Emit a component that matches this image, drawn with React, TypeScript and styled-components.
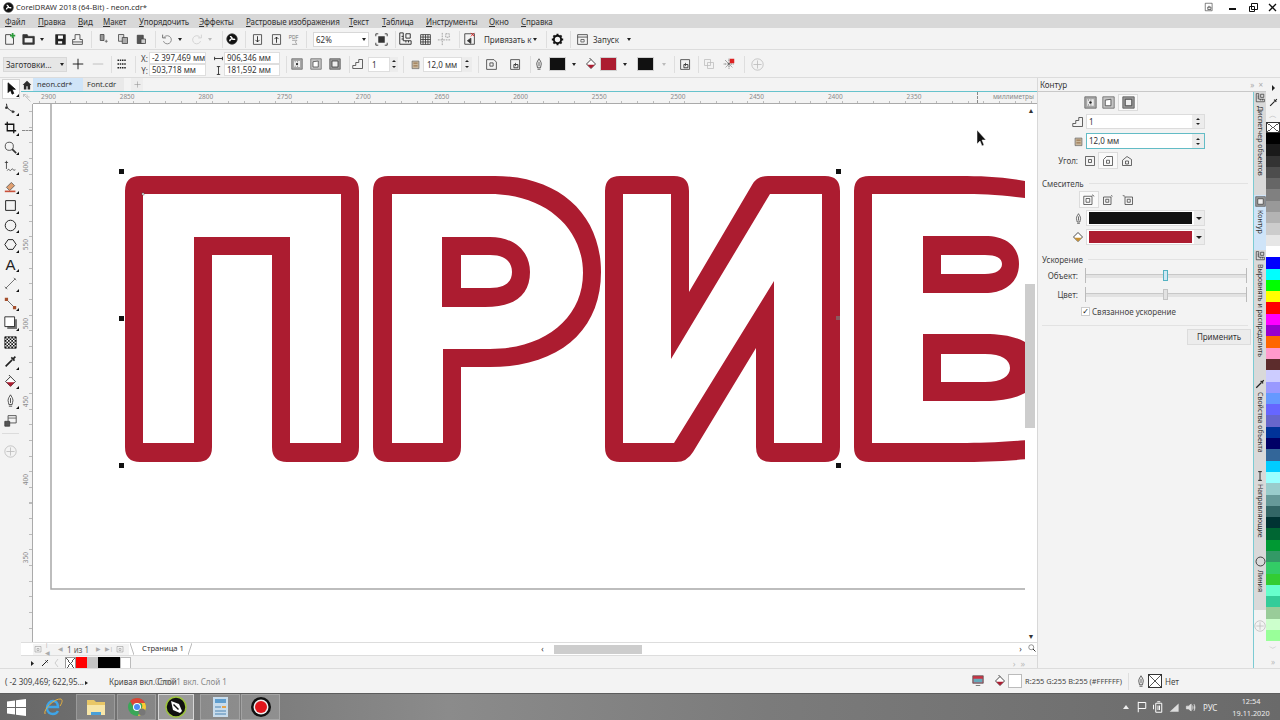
import React, { ReactNode } from 'react';
import styled, { createGlobalStyle } from 'styled-components';

const RED = '#ac1c30';
const FONT = '"Noto Sans", "Open Sans", "Liberation Sans", sans-serif';

const Global = createGlobalStyle`
  html, body { margin: 0; padding: 0; width: 1280px; height: 720px; overflow: hidden; background: #f3f3f3; }
  * { box-sizing: border-box; }
  u { text-underline-offset: 1px; text-decoration-thickness: 1px; }
`;

const G: Record<string, ReactNode> = {
  newdoc: <><path d="M3 3h6l3 3v8H3z" /><path stroke="#2c9c3c" strokeWidth="2" d="M11 1v6M8 4h6" /></>,
  open: <><path fill="#333" d="M1 3h5l1 2h7v9H1z" /><path fill="#f3f3f3" stroke="none" d="M3 7h9v5H3z" /></>,
  save: <><path fill="#222" d="M2 2h12v12H2z" /><path fill="#fff" stroke="none" d="M5 3h6v4H5zM5 10h5v3H5z" /></>,
  publish: <path d="M5 2h6v6h3v6H2V8h3zM2 11h12" />,
  cut: <><path fill="#999" d="M3 2h5v8H3z" /><path stroke="#555" d="M9 11h4M11 9v4" /></>,
  copy: <><path fill="#ddd" d="M2 2h7v9H2z" /><path fill="#aaa" d="M7 6h7v8H7z" /></>,
  paste: <><path fill="#555" d="M3 3h8v11H3z" /><path fill="#ccc" d="M8 8h6v6H8z" /></>,
  undo: <><path stroke="#777" d="M4 5a5 5 0 1 1-1 5" /><path stroke="#555" d="M2 2v4h4" /></>,
  redo: <><path stroke="#ccc" d="M12 5a5 5 0 1 0 1 5" /><path stroke="#ccc" d="M14 2v4h-4" /></>,
  corel: <><circle cx="8" cy="8" r="7" fill="#111" /><path stroke="#fff" strokeWidth="2" d="M5 11c0-4 3-2 3-4s-2-1-2-3M8 8c2 0 3 1 4 0" /></>,
  imp: <><path d="M3 2h10v12H3z" /><path stroke="#111" d="M8 4v7M5.5 8.5 8 11l2.5-2.5" /></>,
  exp: <><path d="M3 2h10v12H3z" /><path stroke="#111" d="M8 12V5M5.5 7.5 8 5l2.5 2.5" /></>,
  pdf: <><text x="1" y="7" fontSize="6" fill="#777" stroke="none" fontFamily="Liberation Sans">PDF</text><path stroke="#999" d="M5 9h6l-2 2 2 3H5" /></>,
  fit: <><path fill="#333" stroke="none" d="M4 4h8v8H4z" /><path stroke="#222" d="M1 4V1h3M12 1h3v3M15 12v3h-3M4 15H1v-3" /></>,
  rulers: <path stroke="#222" d="M2 1h4v9h9v4H2zM4 5h2M4 8h2M9 12v-2M12 12v-2M9 2h5v5H9z" />,
  grid: <path stroke="#333" d="M2 2h12v12H2zM2 5h12M2 8h12M2 11h12M5 2v12M8 2v12M11 2v12" />,
  guides: <path stroke="#999" strokeDasharray="2 1" d="M6 1v14M1 9h14M10 2h4v4h-4z" />,
  snap: <><path d="M2 2h11v12H2z" /><path stroke="#d22" d="m9 1 4 4m0-4-4 4" /><path fill="#333" d="M5 10l4-3v6z" /></>,
  gear: <><circle cx="8" cy="8" r="4.5" stroke="#111" strokeWidth="2.4" /><path stroke="#111" strokeWidth="2.4" d="M8 1v2M8 13v2M1 8h2M13 8h2M3 3l1.5 1.5M11.5 11.5 13 13M13 3l-1.5 1.5M4.500 11.500 3 13" /></>,
  launch: <><path d="M2 2h12v12H2zM2 5h12" /><path stroke="#555" d="M6 8h4v3H6z" /></>,
  plus: <path stroke="#111" strokeWidth="1.200" d="M8 1v14M1 8h14" />,
  minus: <path stroke="#bbb" strokeWidth="1.200" d="M1 8h14" />,
  dots: <path stroke="#222" strokeDasharray="2 1" strokeWidth="2" d="M2 3h12M2 8h12M2 13h12" />,
  hsize: <path stroke="#222" d="M1 8h14M1 5v6M15 5v6" strokeWidth="1.500" />,
  vsize: <path stroke="#222" d="M8 1v14M5 1h6M5 15h6" strokeWidth="1.500" />,
  wrapA: <><path fill="#a8a8a8" stroke="#666" d="M1 1h14v14H1z" /><path fill="#eee" d="M4 4h8v8H4z" stroke="none" /><circle cx="8" cy="8" r="1.500" fill="#222" stroke="none" /><path stroke="#333" strokeDasharray="1 2" d="M5 5h6M5 11h6" /></>,
  wrapB: <><path fill="#c4c4c4" stroke="#666" d="M1 1h14v14H1z" /><path fill="#fff" stroke="#444" d="M4 5l7-1v8H4z" /></>,
  wrapC: <><path fill="#999" stroke="#555" d="M1 1h14v14H1z" /><path fill="#eee" stroke="#333" d="M4 4h8v8H4z" /></>,
  steps: <path stroke="#333" d="M1 14h13V2H9v4H5v4H1z" />,
  width: <><path fill="#c9b79c" stroke="#666" d="M3 3h10v11H3z" /><path stroke="#7a4a20" d="M5 6h6M5 10h6" /></>,
  corner: <><path d="M2 2h9l3 3v9H2z" /><path d="M6 6h4v4H6z" /></>,
  cornerB: <><path d="M6 2h8v12H2V6z" /><path d="M6 7h4v4H6z" /></>,
  cornerC: <><path d="m8 2 6 4v8H2V7z" /><path d="M6 8h4v4H6z" /></>,
  square: <><path d="M2 2h12v12H2z" /><path d="M6 6h4v4H6z" /></>,
  boxA: <><path d="M1 3h11v11H1z" /><path d="M4 6h5v5H4z" /><path d="M12 1l3 2" /></>,
  boxB: <><path d="M2 4h10v10H2z" /><path d="M5 7h4v4H5z" /><path d="M12 2l2 1" /></>,
  boxC: <><path d="M4 4h10v10H4z" /><path d="M7 7h4v4H7z" /><path d="M1 2l3 1" /></>,
  pen: <path stroke="#333" d="M8 1c-1 2-3 4-3 7 0 2 1 3 1 5h4c0-2 1-3 1-5 0-3-2-5-3-7zM8 5v6M6 15h4" />,
  fill: <><path fill="#fff" stroke="#111" d="m2 8 6-6 6 6-6 6z" /><path fill={RED} stroke="none" d="m3 9 10 0-5 5z" /><path stroke="#111" d="M8 2 6 0" /></>,
  fillY: <><path fill="#fff" stroke="#111" d="m2 8 6-6 6 6-6 6z" /><path fill="#c89030" stroke="none" d="m3 9 10 0-5 5z" /></>,
  arrange: <><path d="M2 2h11v12H2z" /><path stroke="#222" d="M6 8h5v4H6z" /><path d="M8 10v-4" /></>,
  weld: <path stroke="#bbb" d="M2 2h8v8H2zM6 6h8v8H6z" />,
  spark: <><path stroke="#222" strokeDasharray="1 1" d="M8 1v14M1 8h14M3 3l10 10M13 3 3 13" /><path fill="#d22" stroke="none" d="M9 1h6v6H9z" /></>,
  addc: <><circle cx="8" cy="8" r="7" stroke="#bbb" /><path stroke="#bbb" d="M8 3v10M3 8h10" /></>,
  arrow: <path fill="#111" stroke="#111" d="M5 1v12l3-3 2 5 2-1-2-5h4z" />,
  shape: <><path stroke="#333" d="M3 2c0 5 4 9 10 10" strokeWidth="1.300" /><path fill="#222" d="M2 6h2v2H2zM10 11h2v2h-2z" /></>,
  crop: <path stroke="#111" strokeWidth="1.600" d="M4 1v11h11M1 4h11v11" />,
  zoom: <><circle cx="6.500" cy="6.500" r="5" stroke="#333" /><path stroke="#333" strokeWidth="2" d="m10 10 5 5" /></>,
  free: <path stroke="#333" d="M3 1v10M1 3h4M4 13c2-4 3 2 5-1s2 2 5 0" />,
  eraser: <><path fill="#e2a070" stroke="#555" d="M3 9 9 3l4 4-6 6z" /><path fill="#c9503a" stroke="none" d="M1 13h13v2H1z" /></>,
  rect: <path stroke="#222" d="M2 2h12v12H2z" strokeWidth="1.200" />,
  ell: <circle cx="8" cy="8" r="6.500" stroke="#222" strokeWidth="1.200" />,
  poly: <path stroke="#222" d="m5 2h6l4 6-4 6H5L1 8z" strokeWidth="1.200" />,
  line: <path stroke="#555" d="m2 14 12-12M1 12l3 3M12 1l3 3" />,
  conn: <><path stroke="#555" d="m3 3 10 10" /><path fill="#a5502e" stroke="none" d="M1 1h4v4H1zM11 11h4v4h-4z" /></>,
  shadow: <><path fill="#777" stroke="none" d="M4 4h12v12H4z" /><path fill="#fff" stroke="#111" d="M1 1h12v12H1z" /></>,
  checker: <><path fill="#fff" stroke="#222" d="M1 1h14v14H1z" /><path stroke="#111" strokeWidth="2" strokeDasharray="2 2" d="M1 2h14M3 4h12M1 6h14M3 8h12M1 10h14M3 12h12M1 14h14" /></>,
  drop: <path stroke="#222" strokeWidth="2" d="m2 14 8-8M9 3l4 4M11 5l3-3" />,
  interact: <><path d="M5 2h10v9H5z" /><path fill="#555" d="M1 9h6v6H1z" /><path stroke="#555" d="M5 5h10" /></>,
  home: <path fill="#2d2d2d" stroke="none" d="M8 1 1 8h2v7h4v-5h2v5h4V8h2z" />,
  rulerCorner: <path stroke="#999" d="M1 1l14 14M1 1v5M1 1h5M8 1v5h5" />,
  lock: <><path stroke="#888" d="M2 3h12v11H2zM6 7h4v4H6z" /></>,
  monitor: <><path fill="#c34" stroke="#555" d="M1 1h14v10H1z" /><path fill="#6ab" stroke="none" d="M2 5h12v5H2z" /><path stroke="#555" d="M5 14h6" /></>,
  flag: <path stroke="#fff" strokeWidth="1.300" d="M3 1v14M3 2h10v8H3" />,
  batt: <path stroke="#fff" strokeWidth="1.300" d="M5 3h8v12H5zM7 1h4M2 5v6M8 6v6M10 6v6" />,
  signal: <path fill="#ddd" stroke="none" d="M1 14 14 2v12z" />,
  sound: <path fill="#ddd" stroke="#ddd" d="M2 6h3l4-3v10L5 10H2zM11 5c1 2 1 4 0 6M13 3c2 3 2 7 0 10" />,
};

const Ico = ({ n, s = 14 }: { n: string; s?: number }) => (
  <svg width={s} height={s} viewBox="0 0 16 16" fill="none" stroke="#3c3c3c" strokeWidth="1">{G[n]}</svg>
);

const Page = styled.div`
  width: 1280px;
  height: 720px;
  display: flex;
  flex-direction: column;
  font-family: ${FONT};
  font-size: 8px;
  color: #333;
  background: #f3f3f3;
  overflow: hidden;
`;

const TitleBar = styled.div`
  height: 14px;
  background: #fff;
  display: flex;
  align-items: center;
  padding-left: 3px;
  gap: 2px;
  font-size: 7.700px;
`;

const TitleLogo = styled.span`
  width: 11px;
  height: 11px;
  display: flex;
`;

const WinControls = styled.div`
  margin-left: auto;
  display: flex;
  align-items: center;
  height: 14px;
`;

const WinBtn = styled.span<{ $w: number; $ml?: number }>`
  width: ${p => p.$w}px;
  margin-left: ${p => p.$ml ?? 0}px;
  display: flex;
  justify-content: center;
`;

const MenuBar = styled.div`
  height: 14px;
  background: #d8d8d8;
  display: flex;
  align-items: center;
  padding-left: 5px;
  font-size: 8px;
  letter-spacing: -0.1px;
`;

const MenuItem = styled.span<{ $w: number }>`
  width: ${p => p.$w}px;
  flex: none;
  white-space: nowrap;
`;

const Bar = styled.div<{ $h: number; $pl: number }>`
  height: ${p => p.$h}px;
  padding-left: ${p => p.$pl}px;
  padding-top: 1px;
  display: flex;
  align-items: center;
  background: #f3f3f3;
  border-bottom: 1px solid #dcdcdc;
  flex: none;
`;

const Tool = styled.span<{ $w: number; $ml?: number }>`
  width: ${p => p.$w}px;
  margin-left: ${p => p.$ml ?? 0}px;
  flex: none;
  display: flex;
  align-items: center;
  justify-content: center;
  position: relative;
`;

const Caret = styled.span<{ $ml?: number; $off?: boolean }>`
  width: 8px;
  margin-left: ${p => p.$ml ?? 0}px;
  flex: none;
  display: flex;
  justify-content: center;
  &::before {
    content: '';
    border-left: 2.5px solid transparent;
    border-right: 2.5px solid transparent;
    border-top: 3px solid ${p => (p.$off ? '#bbb' : '#222')};
  }
`;

const Sep = styled.span<{ $ml: number }>`
  width: 1px;
  height: 17px;
  margin-left: ${p => p.$ml}px;
  background: #dedede;
  flex: none;
`;

const Label = styled.span<{ $ml?: number; $w?: number }>`
  margin-left: ${p => p.$ml ?? 0}px;
  width: ${p => (p.$w ? `${p.$w}px` : 'auto')};
  flex: none;
  white-space: nowrap;
`;

const ColorCode = styled(Label)`
  font-size: 7.400px;
`;

const Combo = styled.span<{ $w: number; $ml?: number; $grey?: boolean }>`
  width: ${p => p.$w}px;
  height: 15px;
  margin-left: ${p => p.$ml ?? 0}px;
  flex: none;
  display: flex;
  align-items: center;
  justify-content: space-between;
  padding-left: 2px;
  border: 1px solid #d8d8d8;
  background: ${p => (p.$grey ? '#e6e6e6' : '#fff')};
`;

const Coords = styled.div<{ $w: number; $ml: number; $box: number }>`
  width: ${p => p.$w}px;
  margin-left: ${p => p.$ml}px;
  display: grid;
  grid-template-columns: 1fr ${p => p.$box}px;
  grid-auto-rows: 12px;
  align-items: center;
  flex: none;
`;

const CoordLabel = styled.span`
  display: flex;
  justify-content: center;
  color: #444;
`;

const CoordValue = styled.span`
  height: 12px;
  background: #fff;
  border: 1px solid #dedede;
  padding-left: 2px;
  line-height: 10px;
  white-space: nowrap;
  overflow: hidden;
`;

const Input = styled.span<{ $w: number; $ml?: number }>`
  width: ${p => p.$w}px;
  height: 15px;
  margin-left: ${p => p.$ml ?? 0}px;
  flex: none;
  background: #fff;
  border: 1px solid #dedede;
  padding-left: 3px;
  line-height: 13px;
`;

const Spin = styled.span<{ $w: number }>`
  width: ${p => p.$w}px;
  height: 15px;
  flex: none;
  display: flex;
  flex-direction: column;
  align-items: center;
  justify-content: space-around;
  padding: 2px 0;
  background: #ececec;
  &::before, &::after {
    content: '';
    border-left: 2px solid transparent;
    border-right: 2px solid transparent;
  }
  &::before { border-bottom: 2.5px solid #222; }
  &::after { border-top: 2.5px solid #222; }
`;

const Swatch = styled.span<{ $c: string; $ml?: number }>`
  width: 17px;
  height: 14px;
  margin-left: ${p => p.$ml ?? 0}px;
  flex: none;
  background: ${p => p.$c};
  border: 1px solid #d0d0d0;
`;

const Workspace = styled.div`
  height: 590px;
  display: flex;
  flex: none;
`;

const Toolbox = styled.div`
  width: 21px;
  flex: none;
  display: flex;
  flex-direction: column;
  align-items: center;
  padding-top: 1px;
  background: #f3f3f3;
`;

const ToolBtn = styled.span<{ $on?: boolean; $fly?: boolean }>`
  width: 18px;
  height: 19.500px;
  flex: none;
  display: flex;
  align-items: center;
  justify-content: center;
  position: relative;
  background: ${p => (p.$on ? '#fff' : 'transparent')};
  outline: ${p => (p.$on ? '1px solid #d4d4d4' : 'none')};
  outline-offset: -1px;
  &::after {
    content: '';
    display: ${p => (p.$fly ? 'block' : 'none')};
    position: absolute;
    right: 1px;
    bottom: 2px;
    border-left: 3px solid transparent;
    border-bottom: 3px solid #111;
  }
`;

const BigA = styled.span`
  font-size: 15px;
  line-height: 15px;
  color: #222;
  font-family: "Liberation Sans", sans-serif;
`;

const ToolRule = styled.span`
  width: 17px;
  height: 1px;
  margin: 3px 0 8px;
  background: #dcdcdc;
`;

const Center = styled.div`
  width: 1016px;
  flex: none;
  display: flex;
  flex-direction: column;
`;

const TabStrip = styled.div`
  height: 14px;
  flex: none;
  display: flex;
  align-items: center;
  background: #f3f3f3;
  border-bottom: 1px solid #66c2cc;
  font-size: 7.500px;
`;

const HomeTab = styled.span`
  width: 12px;
  display: flex;
  justify-content: center;
`;

const DocTab = styled.span<{ $on?: boolean; $w: number }>`
  width: ${p => p.$w}px;
  height: 13px;
  padding-left: 4px;
  line-height: 13px;
  background: ${p => (p.$on ? '#cfe4f8' : '#e9e9e9')};
`;

const AddTab = styled.span`
  width: 12px;
  height: 13px;
  margin-left: 7px;
  background: #e6e6e6;
  display: flex;
  align-items: center;
  justify-content: center;
  opacity: .45;
`;

const RulerRow = styled.div`
  height: 12px;
  flex: none;
  display: flex;
  background: #f3f3f3;
  position: relative;
`;

const RulerCorner = styled.span`
  width: 12px;
  flex: none;
  display: flex;
  align-items: center;
  justify-content: center;
`;

const HScale = styled.div`
  flex: 1;
  display: flex;
  padding-left: 8px;
  font-size: 6.500px;
  line-height: 9px;
  color: #8a8a8a;
  border-bottom: 1px solid #aaa;
  background:
    repeating-linear-gradient(90deg, #bbb 0 1px, transparent 1px 15.740px) 6px 100% / 100% 2px no-repeat;
`;

const HCell = styled.span`
  width: 78.700px;
  flex: none;
`;

const RulerUnit = styled.span`
  margin-left: auto;
  padding-right: 3px;
  white-space: nowrap;
`;

const GuideMark = styled.span`
  position: absolute;
  left: 956px;
  top: 0;
  height: 11px;
  border-left: 1px dashed #888;
`;

const CanvasRow = styled.div`
  height: 538px;
  flex: none;
  display: flex;
`;

const VScale = styled.div`
  width: 12px;
  flex: none;
  padding-top: 24px;
  display: flex;
  flex-direction: column;
  align-items: flex-start;
  position: relative;
  font-size: 6.500px;
  color: #8a8a8a;
  border-right: 1px solid #aaa;
  background:
    repeating-linear-gradient(180deg, #bbb 0 1px, transparent 1px 15.660px) 100% 7px / 3px 100% no-repeat;
`;

const VCell = styled.span`
  height: 78.300px;
  flex: none;
  display: flex;
  align-items: center;
  justify-content: center;
  writing-mode: vertical-rl;
  transform: rotate(180deg);
  line-height: 10px;
`;

const VGuide = styled.span`
  position: absolute;
  left: 1px;
  top: 26px;
  width: 10px;
  border-top: 1px dashed #888;
`;

const Drawing = styled.div`
  width: 992px;
  height: 538px;
  flex: none;
  background: #fff;
  overflow: hidden;
  svg { display: block; }
`;

const VScroll = styled.div`
  width: 12px;
  flex: none;
  background: #fff;
  display: flex;
  flex-direction: column;
  align-items: flex-start;
`;

const ScrollBtn = styled.span<{ $c: string; $mt?: number }>`
  width: 12px;
  height: 12px;
  margin-top: ${p => p.$mt ?? 0}px;
  flex: none;
  display: flex;
  align-items: center;
  justify-content: center;
  font-size: 7px;
  color: #333;
  &::before { content: '${p => p.$c}'; }
`;

const VThumb = styled.span`
  width: 10px;
  height: 144px;
  margin-top: 168px;
  background: #cdcdcd;
  flex: none;
`;

const NavRow = styled.div`
  height: 12px;
  flex: none;
  display: flex;
  align-items: center;
  padding-left: 12px;
  background: #fff;
  border-top: 1px solid #ddd;
  border-bottom: 1px solid #ddd;
  box-sizing: content-box;
  margin-bottom: -2px;
`;

const Pager = styled.div`
  width: 96px;
  height: 11px;
  flex: none;
  display: flex;
  align-items: center;
  gap: 3px;
  padding-left: 1px;
  background: #f3f3f3;
  color: #666;
  font-size: 8px;
`;

const PagerBtn = styled.span`
  width: 8px;
  flex: none;
  display: flex;
  justify-content: center;
  color: #aaa;
  font-size: 6px;
`;

const PageTab = styled.span`
  width: 48px;
  height: 12px;
  margin-left: 5px;
  line-height: 11px;
  text-align: center;
  background: #fff;
  flex: none;
  font-size: 7.600px;
`;

const TabSlash = styled.svg`
  width: 4px;
  height: 12px;
  flex: none;
  margin-left: 1px;
`;

const HTrack = styled.div`
  margin-left: auto;
  width: 500px;
  height: 11px;
  flex: none;
  display: flex;
  align-items: center;
`;

const HThumb = styled.span`
  width: 88px;
  height: 9px;
  margin-left: 6px;
  background: #cdcdcd;
`;

const HArrow = styled.span<{ $auto?: boolean }>`
  width: 11px;
  margin-left: ${p => (p.$auto ? 'auto' : '0')};
  text-align: center;
  font-size: 8px;
  line-height: 10px;
  flex: none;
`;

const DocPalette = styled.div`
  height: 14px;
  flex: none;
  margin-top: 2px;
  display: flex;
  align-items: center;
  padding-left: 7px;
  background: #f3f3f3;
`;

const PalChip = styled.span<{ $c: string }>`
  width: 11px;
  height: 13px;
  flex: none;
  background: ${p => p.$c};
  border: ${p => (p.$c === '#fff' ? '1px solid #bbb' : 'none')};
`;

const PalNone = styled.span`
  width: 11px;
  height: 13px;
  flex: none;
  background:
    linear-gradient(to top right, transparent 47%, #555 47% 53%, transparent 53%),
    linear-gradient(to top left, #fff 47%, #555 47% 53%, #fff 53%);
  border: 1px solid #999;
`;

const FirstChip = styled(PalNone)`
  margin-left: 5px;
`;

const PalEnd = styled.span`
  margin-left: auto;
  padding-right: 7px;
  color: #bbb;
  letter-spacing: 5px;
  font-size: 9px;
`;

const RightGroup = styled.div`
  width: 229px;
  flex: none;
  display: flex;
  flex-direction: column;
  box-shadow: inset 1px 0 #d8d8d8;
`;

const DockTitle = styled.div`
  height: 14px;
  flex: none;
  display: flex;
  align-items: center;
  padding-left: 3px;
  border-bottom: 1px solid #c8c8c8;
`;

const DockTitleBtns = styled.span`
  margin-left: auto;
  color: #aaa;
  font-size: 8px;
  display: flex;
  gap: 4px;
  padding-right: 3px;
`;

const DockBody = styled.div`
  flex: 1;
  display: flex;
  min-height: 0;
`;

const Docker = styled.div`
  width: 216px;
  flex: none;
  display: flex;
  flex-direction: column;
`;

const DockRow = styled.div<{ $h: number; $mt: number; $pl?: number }>`
  height: ${p => p.$h}px;
  margin-top: ${p => p.$mt}px;
  padding-left: ${p => p.$pl ?? 0}px;
  flex: none;
  display: flex;
  align-items: center;
`;

const RowIcon = styled.span<{ $on?: boolean; $ml?: number }>`
  width: 18px;
  height: 15px;
  margin-left: ${p => p.$ml ?? 0}px;
  flex: none;
  display: flex;
  align-items: center;
  justify-content: center;
  background: ${p => (p.$on ? '#fafafa' : 'transparent')};
  outline: ${p => (p.$on ? '1px solid #dcdcdc' : 'none')};
`;

const FieldIcon = styled.span`
  width: 14px;
  flex: none;
  display: flex;
  justify-content: center;
`;

const Field = styled.div<{ $focus?: boolean }>`
  width: 119px;
  height: 100%;
  margin-left: 1px;
  flex: none;
  display: flex;
  background: #fff;
  border: 1px solid ${p => (p.$focus ? '#63bcc6' : '#dcdcdc')};
`;

const FieldText = styled.span`
  flex: 1;
  padding-left: 2px;
  line-height: 13px;
`;

const FieldSpin = styled(Spin)`
  width: 12px;
  height: 100%;
`;

const RowLabel = styled.span`
  width: 41px;
  flex: none;
  text-align: right;
  color: #444;
`;

const Section = styled.div<{ $mt: number }>`
  height: 11px;
  margin-top: ${p => p.$mt}px;
  padding: 0 5px;
  flex: none;
  display: flex;
  align-items: center;
  gap: 5px;
  color: #444;
  &::after { content: ''; flex: 1; height: 1px; background: #e2e2e2; }
`;

const ColorSelect = styled.div`
  width: 119px;
  height: 100%;
  margin-left: 1px;
  flex: none;
  display: flex;
  align-items: center;
  padding-left: 2px;
  background: #fff;
  border: 1px solid #dcdcdc;
`;

const ColorBar = styled.span<{ $c: string }>`
  width: 103px;
  height: 12px;
  flex: none;
  background: ${p => p.$c};
`;

const ColorCaret = styled.span`
  flex: 1;
  height: 100%;
  margin-left: 2px;
  background: #ececec;
  display: flex;
  align-items: center;
  justify-content: center;
  &::before {
    content: '';
    border-left: 3px solid transparent;
    border-right: 3px solid transparent;
    border-top: 3px solid #222;
  }
`;

const Slider = styled.div`
  width: 162px;
  height: 100%;
  margin-left: 7px;
  flex: none;
  position: relative;
  display: flex;
  align-items: center;
  border-left: 1px solid #bbb;
  border-right: 1px solid #bbb;
  &::before { content: ''; flex: 1; height: 3px; background: #e2e2e2; border-top: 1px solid #c8c8c8; }
`;

const Thumb = styled.span<{ $active?: boolean }>`
  position: absolute;
  left: 77px;
  top: 2px;
  width: 5px;
  height: 11px;
  background: ${p => (p.$active ? '#cfe8f4' : '#e2e2e2')};
  border: 1px solid ${p => (p.$active ? '#53b2c2' : '#c4c4c4')};
`;

const Check = styled.span`
  width: 9px;
  height: 9px;
  flex: none;
  background: #fff;
  border: 1px solid #ccc;
  color: #111;
  font-size: 8px;
  line-height: 7px;
  text-align: center;
  font-family: "DejaVu Sans", sans-serif;
`;

const CheckText = styled.span`
  margin-left: 2px;
  color: #444;
`;

const DockLine = styled.div`
  height: 1px;
  margin: 8px 5px 0;
  flex: none;
  background: #e2e2e2;
`;

const ButtonRow = styled.div`
  margin-top: 3px;
  padding-right: 2px;
  flex: none;
  display: flex;
  justify-content: flex-end;
`;

const Apply = styled.span`
  width: 64px;
  height: 16px;
  line-height: 14px;
  text-align: center;
  background: #ececec;
  border: 1px solid #dcdcdc;
`;

const VTabs = styled.div`
  width: 13px;
  flex: none;
  display: flex;
  flex-direction: column;
  align-items: center;
  background: #f3f3f3;
  border-left: 1px solid #7ccbd3;
`;

const VTab = styled.div<{ $h: number; $on?: boolean }>`
  width: 100%;
  height: ${p => p.$h}px;
  flex: none;
  display: flex;
  flex-direction: column;
  align-items: center;
  padding-top: 1px;
  background: ${p => (p.$on ? '#cfe4f8' : '#d9d9d9')};
  font-size: 7px;
  color: #333;
  overflow: hidden;
  svg { flex: none; }
`;

const VTabText = styled.span`
  writing-mode: vertical-rl;
  white-space: nowrap;
  line-height: 12px;
  margin-top: 3px;
  flex: none;
`;

const VTabAdd = styled.span`
  margin-top: 10px;
  display: flex;
`;

const Palette = styled.div`
  width: 14px;
  flex: none;
  display: flex;
  flex-direction: column;
  align-items: center;
`;

const PalTool = styled.span<{ $h: number }>`
  height: ${p => p.$h}px;
  flex: none;
  display: flex;
  align-items: center;
  justify-content: center;
  font-size: 8px;
  color: #bbb;
`;

const ColorCell = styled.span<{ $c: string }>`
  width: 14px;
  height: 11.300px;
  flex: none;
  background: ${p => p.$c};
`;

const NoColor = styled(PalNone)`
  width: 14px;
  height: 11px;
  border-color: #333;
`;

const StatusBar = styled.div`
  height: 25px;
  flex: none;
  display: flex;
  align-items: center;
  padding-left: 5px;
  background: #f3f3f3;
  border-top: 1px solid #dcdcdc;
  color: #444;
`;

const StatusCoord = styled.span`
  width: 80px;
  flex: none;
  white-space: nowrap;
`;

const StatusTri = styled.span`
  width: 24px;
  flex: none;
  &::before {
    content: '';
    display: inline-block;
    border-top: 2.500px solid transparent;
    border-bottom: 2.500px solid transparent;
    border-left: 3px solid #222;
  }
`;

const StatusDark = styled.span`
  white-space: nowrap;
`;

const StatusFaint = styled.span`
  margin-left: -22px;
  white-space: nowrap;
  color: #888;
`;

const StatusRight = styled.div`
  margin-left: auto;
  margin-right: 101px;
  display: flex;
  align-items: center;
`;

const StatusSwatch = styled.span<{ $ml: number }>`
  width: 14px;
  height: 14px;
  margin-left: ${p => p.$ml}px;
  flex: none;
  background: #fff;
  border: 1px solid #bbb;
`;

const StatusCross = styled(PalNone)`
  width: 14px;
  height: 14px;
  margin-left: 1px;
  border-color: #333;
`;

const TaskBar = styled.div`
  height: 27px;
  flex: none;
  display: flex;
  align-items: stretch;
  background: linear-gradient(90deg, #676767 0, #8b8b8b 35%, #7b7b7b 60%, #6a6a6a 100%);
  border-top: 1px solid #5d5d5d;
`;

const TaskBtn = styled.span<{ $w: number; $ml: number; $on?: boolean; $flat?: boolean }>`
  width: ${p => p.$w}px;
  margin-left: ${p => p.$ml}px;
  flex: none;
  display: flex;
  align-items: center;
  justify-content: center;
  background: ${p => (p.$flat ? 'transparent' : p.$on ? 'rgba(255,255,255,.28)' : 'rgba(255,255,255,.14)')};
  border: 1px solid ${p => (p.$flat ? 'transparent' : p.$on ? 'rgba(255,255,255,.6)' : 'rgba(255,255,255,.2)')};
`;

const Tray = styled.div`
  margin-left: auto;
  display: flex;
  align-items: center;
  color: #eee;
`;

const TrayIcon = styled.span`
  width: 16px;
  flex: none;
  display: flex;
  justify-content: center;
`;

const TrayLang = styled.span`
  width: 34px;
  flex: none;
  padding-left: 5px;
`;

const Clock = styled.span`
  width: 38px;
  margin-right: 10px;
  flex: none;
  font-size: 7.300px;
  text-align: center;
  line-height: 12px;
  white-space: nowrap;
`;

const Artwork = () => (
  <svg width="992" height="538" viewBox="33 104 992 538">
    <path d="M51 104V589H1025" fill="none" stroke="#a8a8a8" strokeWidth="1.500" />
    <path
      fill={RED}
      fillRule="evenodd"
      d="M140 176H344Q359 176 359 191V447Q359 462 344 462H287Q272 462 272 447V255H212V447Q212 462 197 462H140Q125 462 125 447V191Q125 176 140 176Z
         M143 194H341V443H290V237H194V443H143Z"
    />
    <path
      fill={RED}
      fillRule="evenodd"
      d="M388 176H495C560 176 601 215 601 272C601 330 560 367 490 367H461V447Q461 462 446 462H388Q373 462 373 447V191Q373 176 388 176Z
         M392 194H490C545 194 583 228 583 273C583 318 545 349 490 349H443V443H392Z
         M442 237H490C515 237 530 252 530 272C530 295 515 307 485 307H442Z
         M461 255H490C505 255 512 262 512 272C512 282 505 288 490 288H461Z"
    />
    <path
      fill={RED}
      fillRule="evenodd"
      d="M620 176H674Q689 176 689 191V292L752 185Q757 176 768 176H825Q840 176 840 191V447Q840 462 825 462H771Q756 462 756 447V348L693 452Q687 462 676 462H620Q605 462 605 447V191Q605 176 620 176Z
         M623 194H671V359L770 194H822V443H774V281L674 443H623Z"
    />
    <path
      fill={RED}
      fillRule="evenodd"
      d="M869 176H960C985 176 1010 177 1040 184V458C1010 461 985 462 960 462H869Q854 462 854 447V191Q854 176 869 176Z
         M872 194H960C985 194 1005 195 1040 200V439C1005 442 985 443 960 443H872Z
         M923 236H985C1008 236 1019 248 1019 264C1019 282 1005 293 985 293H923Z
         M941 255H985C996 255 1002 258 1002 264C1002 270 996 274 985 274H941Z
         M923 334H985C1020 334 1040 345 1040 368C1040 390 1020 401 985 401H923Z
         M941 354H985C1002 354 1010 360 1010 368C1010 376 1002 382 985 382H941Z"
    />
    <g fill="#111">
      <rect x="119" y="169" width="5" height="5" />
      <rect x="119" y="316" width="5" height="5" />
      <rect x="119" y="463" width="5" height="5" />
      <rect x="836" y="169" width="5" height="5" />
      <rect x="836" y="463" width="5" height="5" />
    </g>
    <rect x="836" y="316" width="4" height="4" fill="#8a5a60" />
    <rect x="142" y="193" width="2" height="2" fill="#fff" stroke="#555" strokeWidth=".5" />
    <path d="M977 130V144L980 141L982 146L984 145L982 140H986Z" fill="#111" stroke="#fff" strokeWidth=".5" />
  </svg>
);

const menu: [string, string, number][] = [
  ['Ф', 'айл', 33], ['П', 'равка', 40], ['В', 'ид', 25], ['М', 'акет', 36],
  ['У', 'порядочить', 60], ['Э', 'ффекты', 47], ['Р', 'астровые изображения', 103],
  ['Т', 'екст', 33], ['Т', 'аблица', 44], ['И', 'нструменты', 63], ['О', 'кно', 32], ['С', 'правка', 40],
];

const toolboxIcons: [string, boolean][] = [
  ['shape', true], ['crop', true], ['zoom', true], ['free', true], ['eraser', true], ['rect', true],
  ['ell', true], ['poly', true], ['A', true], ['line', true], ['conn', true], ['shadow', true],
  ['checker', false], ['drop', true], ['fill', true], ['pen', true], ['interact', false],
];

const hLabels = ['2900', '2850', '2800', '2750', '2700', '2650', '2600', '2550', '2500', '2450', '2400', '2350'];
const vLabels = ['600', '550', '500', '450', '400', '350'];

const swatches = [
  '#000', '#1a1a1a', '#333', '#4d4d4d', '#666', '#808080', '#999', '#b3b3b3', '#ccc', '#e6e6e6', '#fff',
  '#0000ff', '#00ffff', '#00ff00', '#ffff00', '#ff0000', '#ff00ff', '#9900cc', '#ff6600', '#ff99cc', '#5c2c2c', '#ccccff',
  '#9999ff', '#6699ff', '#6666ff', '#6666cc', '#003399', '#000066', '#336699', '#00ccff', '#99ffff', '#99cccc',
  '#669999', '#336666', '#003333', '#006633', '#009933', '#339966', '#33cc66', '#33cc33', '#66ffcc', '#33cc99',
  '#99cc99', '#ccffcc', '#99ff99',
];

const App = () => (
  <Page>
    <Global />
    <TitleBar>
      <TitleLogo><Ico n="corel" s={11} /></TitleLogo>
      <span>CorelDRAW 2018 (64-Bit) - neon.cdr*</span>
      <WinControls>
        <WinBtn $w={14}><Ico n="arrange" s={10} /></WinBtn>
        <WinBtn $w={32}><svg width="7" height="8"><path d="M0 6h7" stroke="#111" strokeWidth="2" /></svg></WinBtn>
        <WinBtn $w={10}><svg width="9" height="9" fill="none" stroke="#111"><path d="M2.500.5h6v6h-6zM.5 3.500h5v5h-5z" /></svg></WinBtn>
        <WinBtn $w={16} $ml={6}><svg width="9" height="9" stroke="#111" strokeWidth="1.300"><path d="M1 1l7 7M8 1 1 8" /></svg></WinBtn>
      </WinControls>
    </TitleBar>

    <MenuBar>
      {menu.map(([a, b, w]) => <MenuItem key={a + b} $w={w}><u>{a}</u>{b}</MenuItem>)}
    </MenuBar>

    <Bar $h={22} $pl={1}>
      <Tool $w={18}><Ico n="newdoc" /></Tool>
      <Tool $w={18} $ml={1}><Ico n="open" /></Tool>
      <Caret />
      <Tool $w={16} $ml={6}><Ico n="save" s={13} /></Tool>
      <Tool $w={16} $ml={1}><Ico n="publish" s={13} /></Tool>
      <Sep $ml={6} />
      <Tool $w={16} $ml={4}><Ico n="cut" s={12} /></Tool>
      <Tool $w={16} $ml={3}><Ico n="copy" s={12} /></Tool>
      <Tool $w={16} $ml={2}><Ico n="paste" s={12} /></Tool>
      <Sep $ml={6} />
      <Tool $w={16} $ml={3}><Ico n="undo" s={13} /></Tool>
      <Caret $ml={1} />
      <Tool $w={16} $ml={4}><Ico n="redo" s={13} /></Tool>
      <Caret $ml={2} $off />
      <Sep $ml={8} />
      <Tool $w={16} $ml={1}><Ico n="corel" s={12} /></Tool>
      <Sep $ml={5} />
      <Tool $w={16} $ml={3}><Ico n="imp" s={13} /></Tool>
      <Tool $w={16} $ml={3}><Ico n="exp" s={13} /></Tool>
      <Tool $w={16} $ml={2}><Ico n="pdf" s={13} /></Tool>
      <Sep $ml={4} />
      <Combo $w={56} $ml={6}>62%<Caret /></Combo>
      <Tool $w={18} $ml={3}><Ico n="fit" s={13} /></Tool>
      <Sep $ml={5} />
      <Tool $w={16} $ml={1}><Ico n="rulers" /></Tool>
      <Tool $w={16} $ml={4}><Ico n="grid" s={13} /></Tool>
      <Tool $w={16} $ml={3}><Ico n="guides" /></Tool>
      <Sep $ml={7} />
      <Tool $w={16} $ml={2}><Ico n="snap" /></Tool>
      <Label $ml={6} $w={44}>Привязать к</Label>
      <Caret $ml={3} />
      <Sep $ml={7} />
      <Tool $w={16} $ml={2}><Ico n="gear" s={13} /></Tool>
      <Sep $ml={5} />
      <Tool $w={16} $ml={3}><Ico n="launch" s={13} /></Tool>
      <Label $ml={3} $w={26}>Запуск</Label>
      <Caret $ml={6} />
    </Bar>

    <Bar $h={28} $pl={3}>
      <Combo $w={64} $grey>Заготовки...<Caret /></Combo>
      <Tool $w={18} $ml={2}><Ico n="plus" s={12} /></Tool>
      <Tool $w={18} $ml={2}><Ico n="minus" s={12} /></Tool>
      <Sep $ml={4} />
      <Tool $w={16} $ml={2}><Ico n="dots" s={12} /></Tool>
      <Sep $ml={5} />
      <Coords $w={66} $ml={4} $box={57}>
        <CoordLabel>X:</CoordLabel><CoordValue>-2 397,469 мм</CoordValue>
        <CoordLabel>Y:</CoordLabel><CoordValue>503,718 мм</CoordValue>
      </Coords>
      <Coords $w={68} $ml={6} $box={56}>
        <CoordLabel><Ico n="hsize" s={9} /></CoordLabel><CoordValue>906,346 мм</CoordValue>
        <CoordLabel><Ico n="vsize" s={9} /></CoordLabel><CoordValue>181,592 мм</CoordValue>
      </Coords>
      <Sep $ml={6} />
      <Tool $w={18} $ml={1}><Ico n="wrapA" s={12} /></Tool>
      <Tool $w={18} $ml={1}><Ico n="wrapB" s={12} /></Tool>
      <Tool $w={18} $ml={1}><Ico n="wrapC" s={12} /></Tool>
      <Sep $ml={5} />
      <Tool $w={14} $ml={1}><Ico n="steps" s={12} /></Tool>
      <Input $w={22} $ml={3}>1</Input>
      <Spin $w={8} />
      <Sep $ml={5} />
      <Tool $w={16} $ml={3}><Ico n="width" s={11} /></Tool>
      <Input $w={39}>12,0 мм</Input>
      <Spin $w={10} />
      <Sep $ml={6} />
      <Tool $w={18} $ml={3}><Ico n="corner" s={13} /></Tool>
      <Tool $w={18} $ml={6}><Ico n="arrange" s={13} /></Tool>
      <Sep $ml={6} />
      <Tool $w={12} $ml={2}><Ico n="pen" s={12} /></Tool>
      <Swatch $c="#111" $ml={4} />
      <Caret $ml={4} />
      <Tool $w={14} $ml={6}><Ico n="fill" s={12} /></Tool>
      <Swatch $c={RED} $ml={2} />
      <Caret $ml={4} />
      <Swatch $c="#111" $ml={8} />
      <Caret $ml={6} $off />
      <Sep $ml={6} />
      <Tool $w={18} $ml={1}><Ico n="arrange" s={13} /></Tool>
      <Sep $ml={4} />
      <Tool $w={14} $ml={3}><Ico n="weld" s={12} /></Tool>
      <Tool $w={16} $ml={5}><Ico n="spark" s={12} /></Tool>
      <Sep $ml={7} />
      <Tool $w={16} $ml={4}><Ico n="addc" s={13} /></Tool>
    </Bar>

    <Workspace>
      <Toolbox>
        <ToolBtn $on $fly><Ico n="arrow" s={13} /></ToolBtn>
        {toolboxIcons.map(([n, fly]) => (
          <ToolBtn key={n} $fly={fly}>{n === 'A' ? <BigA>A</BigA> : <Ico n={n} s={13} />}</ToolBtn>
        ))}
        <ToolRule />
        <ToolBtn><Ico n="addc" s={13} /></ToolBtn>
      </Toolbox>

      <Center>
        <TabStrip>
          <HomeTab><Ico n="home" s={10} /></HomeTab>
          <DocTab $on $w={50}>neon.cdr*</DocTab>
          <DocTab $w={41}>Font.cdr</DocTab>
          <AddTab><Ico n="plus" s={7} /></AddTab>
        </TabStrip>
        <RulerRow>
          <RulerCorner><Ico n="rulerCorner" s={8} /></RulerCorner>
          <HScale>
            {hLabels.map(l => <HCell key={l}>{l}</HCell>)}
            <RulerUnit>миллиметры</RulerUnit>
          </HScale>
          <GuideMark />
        </RulerRow>
        <CanvasRow>
          <VScale>
            {vLabels.map(l => <VCell key={l}>{l}</VCell>)}
            <VGuide />
          </VScale>
          <Drawing><Artwork /></Drawing>
          <VScroll>
            <ScrollBtn $c="▲" />
            <VThumb />
            <ScrollBtn $c="▼" $mt={202} />
          </VScroll>
        </CanvasRow>
        <NavRow>
          <Pager>
            <PagerBtn><Ico n="lock" s={8} /></PagerBtn>
            <PagerBtn>|◀</PagerBtn>
            <PagerBtn>◀</PagerBtn>
            <Label $w={24}>1 из 1</Label>
            <PagerBtn>▶</PagerBtn>
            <PagerBtn>▶|</PagerBtn>
            <PagerBtn><Ico n="lock" s={8} /></PagerBtn>
          </Pager>
          <TabSlash viewBox="0 0 4 12"><path d="M0 0l4 12" stroke="#bbb" /></TabSlash>
          <PageTab>Страница 1</PageTab>
          <TabSlash viewBox="0 0 4 12"><path d="M0 12L4 0" stroke="#bbb" /></TabSlash>
          <HTrack>
            <HArrow>‹</HArrow>
            <HThumb />
            <HArrow $auto>›</HArrow>
            <HArrow><Ico n="zoom" s={8} /></HArrow>
          </HTrack>
        </NavRow>
        <DocPalette>
          <Tool $w={9}><svg width="5" height="5"><path d="M1 0l3 2.500L1 5z" fill="#222" /></svg></Tool>
          <Tool $w={14} $ml={1}><Ico n="drop" s={8} /></Tool>
          <Tool $w={8}><svg width="5" height="8" fill="none" stroke="#ccc"><path d="M4 0 1 4l3 4" /></svg></Tool>
          <FirstChip />
          <PalChip $c="#f00" />
          <PalChip $c="#c4c4c4" />
          <PalChip $c="#000" />
          <PalChip $c="#000" />
          <PalChip $c="#fff" />
          <PalEnd>›»</PalEnd>
        </DocPalette>
      </Center>

      <RightGroup>
        <DockTitle>
          Контур
          <DockTitleBtns><span>»</span><span>×</span></DockTitleBtns>
        </DockTitle>
        <DockBody>
          <Docker>
            <DockRow $h={15} $mt={3} $pl={44}>
              <RowIcon><Ico n="wrapA" s={13} /></RowIcon>
              <RowIcon><Ico n="wrapB" s={13} /></RowIcon>
              <RowIcon $on $ml={2}><Ico n="wrapC" s={13} /></RowIcon>
            </DockRow>
            <DockRow $h={15} $mt={4} $pl={34}>
              <FieldIcon><Ico n="steps" s={12} /></FieldIcon>
              <Field><FieldText>1</FieldText><FieldSpin $w={12} /></Field>
            </DockRow>
            <DockRow $h={16} $mt={4} $pl={34}>
              <FieldIcon><Ico n="width" s={11} /></FieldIcon>
              <Field $focus><FieldText>12,0 мм</FieldText><FieldSpin $w={12} /></Field>
            </DockRow>
            <DockRow $h={15} $mt={4}>
              <RowLabel>Угол:</RowLabel>
              <RowIcon $ml={3}><Ico n="square" s={12} /></RowIcon>
              <RowIcon $on><Ico n="cornerB" s={12} /></RowIcon>
              <RowIcon $ml={1}><Ico n="cornerC" s={12} /></RowIcon>
            </DockRow>
            <Section $mt={10}>Смеситель</Section>
            <DockRow $h={15} $mt={3} $pl={43}>
              <RowIcon $on><Ico n="boxA" s={12} /></RowIcon>
              <RowIcon $ml={1}><Ico n="boxB" s={12} /></RowIcon>
              <RowIcon $ml={2}><Ico n="boxC" s={12} /></RowIcon>
            </DockRow>
            <DockRow $h={16} $mt={3} $pl={34}>
              <FieldIcon><Ico n="pen" s={11} /></FieldIcon>
              <ColorSelect><ColorBar $c="#111" /><ColorCaret /></ColorSelect>
            </DockRow>
            <DockRow $h={16} $mt={3} $pl={34}>
              <FieldIcon><Ico n="fillY" s={12} /></FieldIcon>
              <ColorSelect><ColorBar $c={RED} /><ColorCaret /></ColorSelect>
            </DockRow>
            <Section $mt={9}>Ускорение</Section>
            <DockRow $h={15} $mt={3}>
              <RowLabel>Объект:</RowLabel>
              <Slider><Thumb $active /></Slider>
            </DockRow>
            <DockRow $h={15} $mt={4}>
              <RowLabel>Цвет:</RowLabel>
              <Slider><Thumb /></Slider>
            </DockRow>
            <DockRow $h={12} $mt={3} $pl={44}>
              <Check>✓</Check>
              <CheckText>Связанное ускорение</CheckText>
            </DockRow>
            <DockLine />
            <ButtonRow><Apply>Применить</Apply></ButtonRow>
          </Docker>

          <VTabs>
            <VTab $h={103}><Ico n="rulers" s={10} /><VTabText>Диспетчер объектов</VTabText></VTab>
            <VTab $h={55} $on><Ico n="wrapC" s={11} /><VTabText>Контур</VTabText></VTab>
            <VTab $h={128}><Ico n="rulers" s={10} /><VTabText>Выровнять и распределить</VTabText></VTab>
            <VTab $h={92}><Ico n="drop" s={10} /><VTabText>Свойства объекта</VTabText></VTab>
            <VTab $h={85}><Ico n="vsize" s={10} /><VTabText>Направляющие</VTabText></VTab>
            <VTab $h={55}><Ico n="ell" s={11} /><VTabText>Линия</VTabText></VTab>
            <VTabAdd><Ico n="addc" s={12} /></VTabAdd>
          </VTabs>
        </DockBody>
      </RightGroup>

      <Palette>
        <PalTool $h={19}><svg width="5" height="6"><path d="M1 0l3 3-3 3z" fill="#222" /></svg></PalTool>
        <PalTool $h={11}><Ico n="drop" s={9} /></PalTool>
        <PalTool $h={14}>︿</PalTool>
        <NoColor />
        {swatches.map(c => <ColorCell key={c} $c={c} />)}
        <PalTool $h={14}>﹀</PalTool>
        <PalTool $h={12}>»</PalTool>
      </Palette>
    </Workspace>

    <StatusBar>
      <StatusCoord>( -2 309,469; 622,95...</StatusCoord>
      <StatusTri />
      <StatusDark>Кривая вкл. Слой</StatusDark>
      <StatusFaint>Слой 1 вкл. Слой 1</StatusFaint>
      <StatusRight>
        <Ico n="monitor" s={12} />
        <Tool $w={14} $ml={9}><Ico n="fill" s={12} /></Tool>
        <StatusSwatch $ml={1} />
        <ColorCode $ml={3}>R:255 G:255 B:255 (#FFFFFF)</ColorCode>
        <Sep $ml={6} />
        <Tool $w={12} $ml={6}><Ico n="pen" s={12} /></Tool>
        <StatusCross />
        <Label $ml={3}>Нет</Label>
      </StatusRight>
    </StatusBar>

    <TaskBar>
      <TaskBtn $w={32} $ml={0} $flat>
        <svg width="19" height="17" viewBox="0 0 19 17" fill="#fff"><path d="M0 2.500 8 1.500V8H0zM9 1.300 19 0V8H9zM0 9h8v6.500L0 14.500zM9 9h10v8L9 15.700z" /></svg>
      </TaskBtn>
      <TaskBtn $w={40} $ml={1} $flat>
        <svg width="20" height="20" viewBox="0 0 20 20" fill="none">
          <path d="M4 10h11c0-4-2-6-5-6s-6 3-6 7 3 6 6 6 4-1 5-3" stroke="#3fa5e8" strokeWidth="2.400" />
          <path d="M2 17C0 12 12 1 18 2c2 1 1 4-1 7" stroke="#e8b23f" strokeWidth="1" />
        </svg>
      </TaskBtn>
      <TaskBtn $w={39} $ml={3}>
        <svg width="20" height="18" viewBox="0 0 20 18"><path fill="#e9c766" d="M1 2h7l2 2h9v13H1z" /><path fill="#f7e6a8" d="M1 7h18v10H1z" /><path fill="#4aa0d8" d="M5 14h10v3H5z" /></svg>
      </TaskBtn>
      <TaskBtn $w={39} $ml={2}>
        <svg width="20" height="20" viewBox="0 0 20 20">
          <circle cx="10" cy="10" r="9" fill="#3aa757" />
          <path fill="#dc4437" d="M10 1a9 9 0 0 1 8 5h-8a4 4 0 0 0-4 3L3 4a9 9 0 0 1 7-3z" />
          <path fill="#fcc934" d="M18 6a9 9 0 0 1-7 13l3-7a4 4 0 0 0 0-6z" />
          <circle cx="10" cy="10" r="4" fill="#fff" />
          <circle cx="10" cy="10" r="3" fill="#4b8bf5" />
          <circle cx="15" cy="15" r="3.500" fill="#777" />
        </svg>
      </TaskBtn>
      <TaskBtn $w={36} $ml={2} $on>
        <svg width="22" height="22" viewBox="0 0 22 22">
          <circle cx="11" cy="11" r="10" fill="#111" stroke="#9cc43c" strokeWidth="1.500" />
          <path fill="#fff" d="M6 5l8 3 3 7-2 2-7-3z" />
          <path fill="#111" d="m9 8 5 5-1 1-5-5z" />
        </svg>
      </TaskBtn>
      <TaskBtn $w={40} $ml={6}>
        <svg width="15" height="20" viewBox="0 0 15 20"><path fill="#c8dcec" d="M0 0h15v20H0z" /><path fill="#5f9ecf" d="M2 2h11v4H2z" /><path fill="#e4a24a" d="M9 9h4v2H9z" /><path fill="#8ab0cf" d="M2 9h6v2H2zM2 13h11v2H2zM2 16h11v2H2z" /></svg>
      </TaskBtn>
      <TaskBtn $w={39} $ml={1}>
        <svg width="22" height="22" viewBox="0 0 22 22"><circle cx="11" cy="11" r="10" fill="#111" /><circle cx="11" cy="11" r="7.500" fill="#eee" /><circle cx="11" cy="11" r="6" fill="#e0161c" /></svg>
      </TaskBtn>
      <Tray>
        <TrayIcon><svg width="6" height="4"><path d="M0 4l3-4 3 4z" fill="#eee" /></svg></TrayIcon>
        <TrayIcon><Ico n="flag" s={12} /></TrayIcon>
        <TrayIcon><Ico n="batt" s={12} /></TrayIcon>
        <TrayIcon><Ico n="signal" s={11} /></TrayIcon>
        <TrayIcon><Ico n="sound" s={11} /></TrayIcon>
        <TrayLang>РУС</TrayLang>
        <Clock>12:54<br />19.11.2020</Clock>
      </Tray>
    </TaskBar>
  </Page>
);

export default App;
